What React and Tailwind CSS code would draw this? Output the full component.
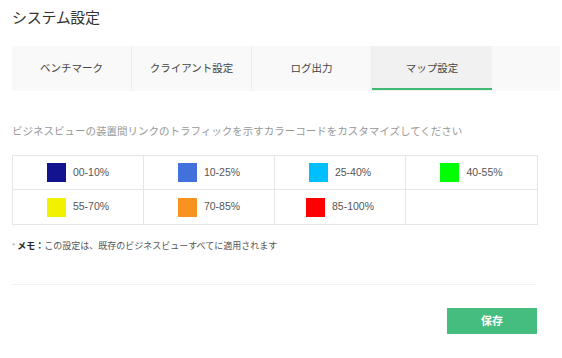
import React from "react";

const tabs = ["ベンチマーク", "クライアント設定", "ログ出力", "マップ設定"];
const rows = [
  [
    { c: "bg-[#13138f]", t: "00-10%" },
    { c: "bg-[#4271dc]", t: "10-25%" },
    { c: "bg-[#00bfff]", t: "25-40%" },
    { c: "bg-[#00ff00]", t: "40-55%" },
  ],
  [
    { c: "bg-[#f2f200]", t: "55-70%" },
    { c: "bg-[#f7931e]", t: "70-85%" },
    { c: "bg-[#ff0000]", t: "85-100%" },
    null,
  ],
];

export default function App() {
  return (
    <div
      className="w-[562px] h-[358px] bg-white overflow-hidden text-[#333]"
      style={{ fontFamily: '"Liberation Sans", "Noto Sans CJK JP", sans-serif' }}
    >
      <div className="pl-[12px] pt-[8px]">
        <h1 className="text-[15px] leading-[20px] text-[#333] tracking-[-0.3px]">システム設定</h1>

        <div className="mt-[18px] w-[548px] h-[45px] bg-[#f9f9f9] flex">
          {tabs.map((t, i) => (
            <div
              key={t}
              className={
                "w-[120px] h-full flex items-center justify-center text-[10.5px] text-[#444] relative " +
                (i === 3 ? "bg-[#f1f1f1]" : "border-r border-[#ececec]")
              }
            >
              {t}
              {i === 3 && <div className="absolute left-0 right-0 bottom-[1px] h-[2px] bg-[#3fba76]" />}
            </div>
          ))}
        </div>

        <p className="mt-[32px] text-[10.5px] leading-[16px] text-[#999]">
          ビジネスビューの装置間リンクのトラフィックを示すカラーコードをカスタマイズしてください
        </p>

        <div className="mt-[16px] w-[526px] border border-[#e6e6e6]">
          {rows.map((r, ri) => (
            <div key={ri} className={"grid grid-cols-4 h-[34px] " + (ri === 0 ? "border-b border-[#e6e6e6]" : "")}>
              {r.map((cell, ci) => (
                <div
                  key={ci}
                  className={"flex items-center justify-center gap-[7px] " + (ci < 3 ? "border-r border-[#e6e6e6]" : "")}
                >
                  {cell && (
                    <>
                      <span className={"w-[19px] h-[19px] " + cell.c} />
                      <span className="text-[10.5px] text-[#555]">{cell.t}</span>
                    </>
                  )}
                </div>
              ))}
            </div>
          ))}
        </div>

        <p className="mt-[14px] text-[9px] leading-[14px] text-[#555] flex items-center">
          <span className="text-[#aaa] mr-[2px] text-[8px]">*</span>
          <span className="font-bold text-[#222]">メモ：</span>
          <span>この設定は、既存のビジネスビューすべてに適用されます</span>
        </p>

        <div className="mt-[31px] w-[525px] h-px bg-[#f2f2f2]" />

        <div className="w-[525px] flex justify-end mt-[23px]">
          <button className="w-[90px] h-[26px] bg-[#45bd7e] text-white text-[11px] font-bold flex items-center justify-center">
            保存
          </button>
        </div>
      </div>
    </div>
  );
}
